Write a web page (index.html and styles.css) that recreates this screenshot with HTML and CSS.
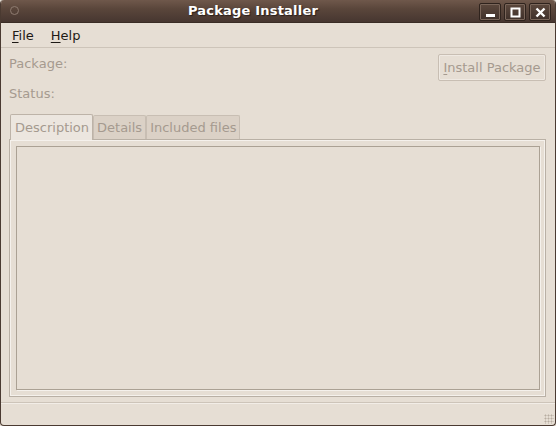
FILE: index.html
```html
<!DOCTYPE html>
<html>
<head>
<meta charset="utf-8">
<link rel="stylesheet" href="styles.css">
</head>
<body>
<div class="window">
  <div class="titlebar">
    <span class="orb"></span>
    <span class="title">Package Installer</span>
    <div class="wbtns">
      <span class="wbtn"><svg width="11" height="11" viewBox="0 0 11 11"><rect x="1" y="7" width="9" height="3" fill="#fff"/></svg></span>
      <span class="wbtn"><svg width="11" height="11" viewBox="0 0 11 11"><rect x="1.5" y="1.5" width="8" height="8" fill="none" stroke="#fff" stroke-width="2"/></svg></span>
      <span class="wbtn"><svg width="11" height="11" viewBox="0 0 11 11"><path d="M1.5 1.5L9.5 9.5M9.5 1.5L1.5 9.5" stroke="#fff" stroke-width="2.4"/></svg></span>
    </div>
  </div>
  <div class="menubar">
    <span class="menu"><u>F</u>ile</span>
    <span class="menu"><u>H</u>elp</span>
  </div>
  <div class="content">
    <div class="info">
      <div class="labels">
        <div class="label">Package:</div>
        <div class="label">Status:</div>
      </div>
      <button class="install"><u>I</u>nstall Package</button>
    </div>
    <div class="notebook">
      <div class="tabs">
        <span class="tab active">Description</span>
        <span class="tab">Details</span>
        <span class="tab">Included files</span>
      </div>
      <div class="page">
        <div class="textview"></div>
      </div>
    </div>
  </div>
  <div class="statusbar"><span class="grip"></span></div>
</div>
</body>
</html>
```
FILE: styles.css
```css
html, body {
  margin: 0;
  padding: 0;
  background: #e6ded4;
}
body {
  width: 556px;
  height: 426px;
  overflow: hidden;
  font-family: "DejaVu Sans", sans-serif;
  font-size: 13px;
}
.window {
  width: 556px;
  height: 426px;
  box-sizing: border-box;
  border-left: 1px solid #4a3a31;
  border-right: 1px solid #4a3a31;
  border-bottom: 1px solid #4a3a31;
  border-radius: 4px 4px 4px 4px;
  background: #e6ded4;
  display: flex;
  flex-direction: column;
  overflow: hidden;
}
.titlebar {
  height: 23px;
  flex: none;
  box-sizing: border-box;
  background: linear-gradient(#6f584b, #5a463b 40%, #463630);
  border-bottom: 1px solid #3a2c25;
  position: relative;
  display: flex;
  align-items: center;
  justify-content: center;
  padding-right: 50px;
}
.orb {
  position: absolute;
  left: 9px;
  top: 6px;
  width: 9px;
  height: 9px;
  border-radius: 50%;
  border: 1px solid #8e7b70;
  box-sizing: border-box;
}
.title {
  color: #fff;
  font-weight: bold;
  font-size: 13px;
  text-shadow: 1px 1px 1px #2a1f1a;
  margin-top: -1px;
  letter-spacing: 0.2px;
}
.wbtns {
  position: absolute;
  right: 4px;
  top: 3px;
  display: flex;
  gap: 3px;
}
.wbtn {
  width: 22px;
  height: 18px;
  box-sizing: border-box;
  border: 1px solid #2f231d;
  box-shadow: inset 0 0 0 1px #7a665a;
  border-radius: 2px;
  background: linear-gradient(#5c483d, #3f302a);
  display: flex;
  align-items: center;
  justify-content: center;
}
.menubar {
  height: 25px;
  flex: none;
  box-sizing: border-box;
  border-bottom: 1px solid #cdc4b9;
  display: flex;
  align-items: center;
  padding-left: 11px;
  gap: 17px;
  color: #1e1a16;
}
.menu u { text-decoration-thickness: 1px; text-underline-offset: 2px; }
.content {
  flex: 1;
  display: flex;
  flex-direction: column;
  padding: 7px 8px 0 8px;
}
.info {
  display: flex;
  justify-content: space-between;
  align-items: flex-start;
}
.labels {
  display: flex;
  flex-direction: column;
  gap: 14px;
  padding-top: 1px;
}
.label {
  color: #a59a8f;
  height: 16px;
  line-height: 16px;
}
.install {
  font-family: "DejaVu Sans", sans-serif;
  font-size: 13px;
  color: #a59a8f;
  background: #e6ded4;
  border: 1px solid #c8beb3;
  box-shadow: inset 0 0 0 1px #efe9e2;
  border-radius: 2px;
  height: 27px;
  width: 108px;
  padding: 0;
  margin-top: -1px;
  margin-right: 1px;
}
.install u { text-decoration-thickness: 1px; text-underline-offset: 2px; }
.notebook {
  margin-top: 12px;
  display: flex;
  flex-direction: column;
}
.tabs {
  display: flex;
  align-items: flex-end;
  padding-left: 1px;
  height: 25px;
  position: relative;
  z-index: 1;
}
.tab {
  color: #a59a8f;
  height: 24px;
  line-height: 23px;
  box-sizing: border-box;
  border: 1px solid #c8beb3;
  border-bottom: none;
  background: #dbd1c6;
  padding: 0 3px;
  border-radius: 2px 2px 0 0;
  margin-bottom: 0;
}
.tab.active {
  background: #ece6df;
  height: 26px;
  line-height: 25px;
  padding: 0 3px 0 4px;
  margin-bottom: -1px;
  border-color: #bdb3a8;
}
.page {
  height: 258px;
  box-sizing: border-box;
  border: 1px solid #b9b0a5;
  box-shadow: inset 1px 1px 0 #f5f1ec, inset -1px -1px 0 #f5f1ec;
  padding: 6px 5px 6px 6px;
  margin-right: 1px;
}
.textview {
  height: 100%;
  box-sizing: border-box;
  border: 1px solid #aba194;
  box-shadow: 1px 1px 0 #f5f1ec;
  background: #e6ded4;
}
.statusbar {
  height: 23px;
  flex: none;
  box-sizing: border-box;
  border-top: 1px solid #cdc4b9;
  box-shadow: inset 0 1px 0 #f2ede7;
  position: relative;
}
.grip {
  position: absolute;
  right: 1px;
  bottom: 1px;
  width: 10px;
  height: 10px;
  background-image: radial-gradient(circle, #b8ada1 0.8px, transparent 1.2px);
  background-size: 3px 3px;
}
```
